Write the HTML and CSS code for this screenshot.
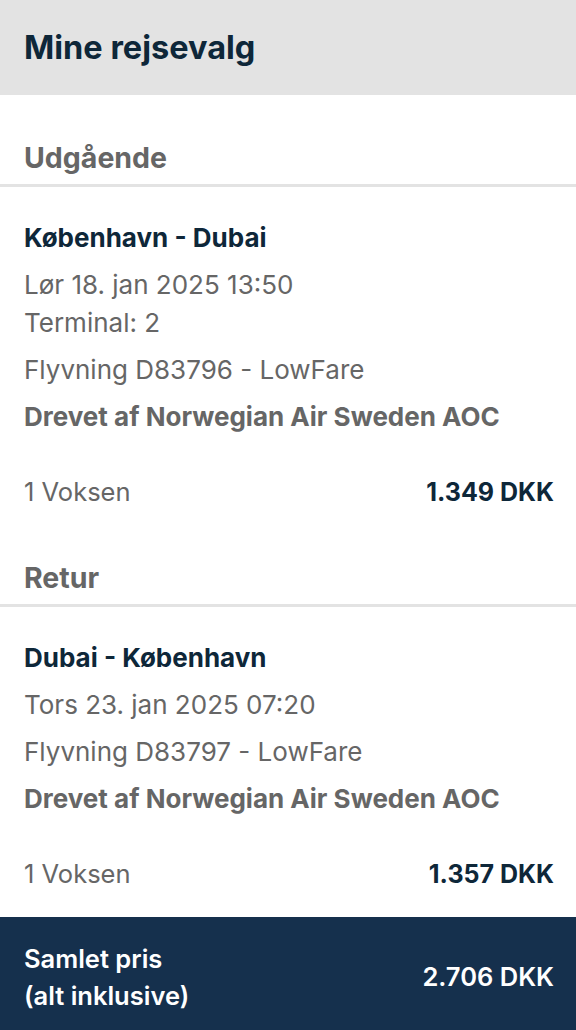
FILE: index.html
```html
<!DOCTYPE html>
<html lang="da">
<head>
<meta charset="utf-8">
<title>Mine rejsevalg</title>
<link rel="stylesheet" href="styles.css">
</head>
<body>
<div class="page">
  <header class="header">
    <h1 class="title">Mine rejsevalg</h1>
  </header>
  <main class="main">
    <section class="leg">
      <h2 class="leg-title">Udgående</h2>
      <div class="leg-body">
        <div class="route">København - Dubai</div>
        <div class="info">Lør 18. jan 2025 13:50<br>Terminal: 2</div>
        <div class="info">Flyvning D83796 - LowFare</div>
        <div class="operator">Drevet af Norwegian Air Sweden AOC</div>
        <div class="price-row">
          <span class="pax">1 Voksen</span>
          <span class="price">1.349 DKK</span>
        </div>
      </div>
    </section>
    <section class="leg leg-return">
      <h2 class="leg-title">Retur</h2>
      <div class="leg-body">
        <div class="route">Dubai - København</div>
        <div class="info">Tors 23. jan 2025 07:20</div>
        <div class="info">Flyvning D83797 - LowFare</div>
        <div class="operator">Drevet af Norwegian Air Sweden AOC</div>
        <div class="price-row">
          <span class="pax">1 Voksen</span>
          <span class="price">1.357 DKK</span>
        </div>
      </div>
    </section>
  </main>
  <footer class="total">
    <div class="total-label">Samlet pris<br>(alt inklusive)</div>
    <div class="total-price">2.706 DKK</div>
  </footer>
</div>
</body>
</html>
```
FILE: styles.css
```css
* { box-sizing: border-box; }
html, body { margin: 0; padding: 0; }
body {
  font-family: Inter, "Liberation Sans", sans-serif;
  background: #ffffff;
  width: 576px;
  height: 1030px;
  overflow: hidden;
}
.page {
  display: flex;
  flex-direction: column;
  height: 1030px;
}
.header {
  height: 95px;
  background: #e3e3e3;
  display: flex;
  align-items: center;
  padding: 0 24px;
}
.title {
  margin: 0;
  font-size: 32.5px;
  font-weight: 700;
  color: #0e2739;
  line-height: 40px;
}
.main {
  flex: 1;
  padding-top: 45px;
}
.leg-title {
  margin: 0;
  padding: 0 24px;
  font-size: 28.5px;
  line-height: 36px;
  font-weight: 700;
  color: #666666;
  border-bottom: 3px solid #e3e3e3;
  padding-bottom: 8px;
}
.leg-body {
  padding: 32px 22px 0 24px;
  display: flex;
  flex-direction: column;
  gap: 9px;
}
.route {
  font-size: 26px;
  font-weight: 700;
  line-height: 38px;
  color: #0e2739;
}
.info {
  font-size: 26px;
  font-weight: 400;
  line-height: 38px;
  color: #666666;
}
.operator {
  font-size: 26px;
  font-weight: 700;
  line-height: 38px;
  color: #666666;
}
.price-row {
  display: flex;
  justify-content: space-between;
  align-items: center;
  margin-top: 28px;
  line-height: 38px;
}
.pax {
  font-size: 25.5px;
  color: #666666;
}
.price {
  font-size: 25px;
  font-weight: 700;
  color: #0e2739;
}
.leg-return {
  margin-top: 49px;
}
.total {
  height: 113px;
  background: #15304d;
  color: #ffffff;
  display: flex;
  justify-content: space-between;
  align-items: center;
  padding: 6px 22px 0 24px;
}
.total-label {
  font-size: 25.5px;
  font-weight: 600;
  line-height: 37px;
}
.total-price {
  font-size: 25.5px;
  font-weight: 600;
  line-height: 37px;
}
```
